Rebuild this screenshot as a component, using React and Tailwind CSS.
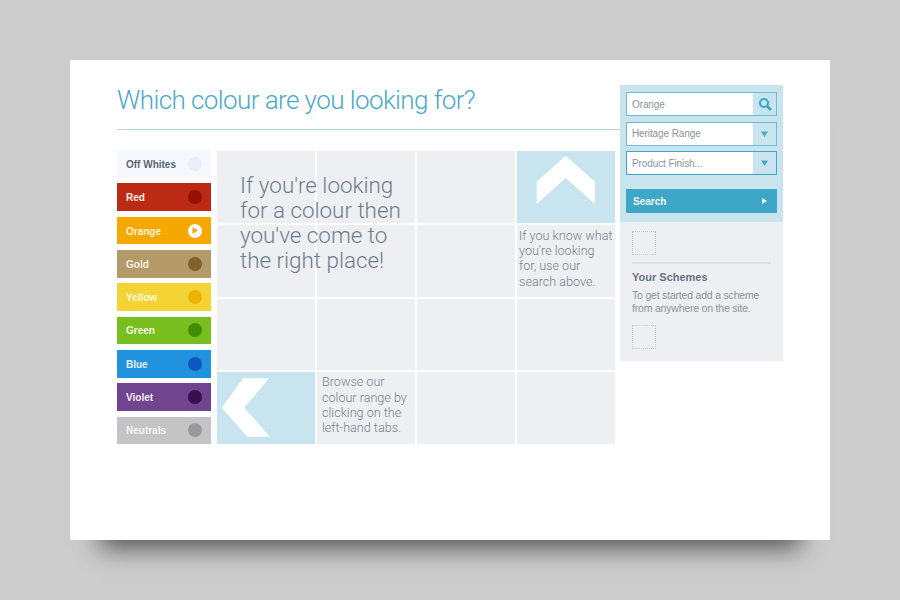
import React from "react";

const tabs = [
  { name: "Off Whites", bg: "bg-[#f5f8fd]", dot: "bg-[#e9eefa]", text: "text-[#5a6670]" },
  { name: "Red", bg: "bg-[#bb2a14]", dot: "bg-[#941000]", text: "text-[#fbe9e4]" },
  { name: "Orange", bg: "bg-[#f6a800]", dot: "bg-white", text: "text-[#fff4dc]", play: true },
  { name: "Gold", bg: "bg-[#b49a68]", dot: "bg-[#84622b]", text: "text-[#f6f0e2]" },
  { name: "Yellow", bg: "bg-[#f4d434]", dot: "bg-[#ecb400]", text: "text-[#fdf8dc]" },
  { name: "Green", bg: "bg-[#78be1e]", dot: "bg-[#3f8e00]", text: "text-[#f1f9e2]" },
  { name: "Blue", bg: "bg-[#2092de]", dot: "bg-[#0c58c0]", text: "text-[#e8f4fc]" },
  { name: "Violet", bg: "bg-[#70448e]", dot: "bg-[#35124f]", text: "text-[#f2ebf6]" },
  { name: "Neutrals", bg: "bg-[#c4c4c6]", dot: "bg-[#9a9a9e]", text: "text-[#f4f4f4]" },
];

const sans = "font-['Liberation_Sans',Arial,sans-serif]";
const light = "font-['Roboto','Liberation_Sans',sans-serif] font-light";

function Cell({ children, blue }) {
  return <div className={`h-[71.75px] ${blue ? "bg-[#c8e4ee]" : "bg-[#eeeff3]"}`}>{children}</div>;
}

function Note({ lines, wide }) {
  return (
    <p className={`${light} text-[12.6px] leading-[15.3px] text-[#77818a] ${wide ? "pl-[2px] pt-[3px]" : "pl-[5px] pt-[2px]"} whitespace-nowrap`}>
      {lines.map((l) => (
        <span key={l} className="block">{l}</span>
      ))}
    </p>
  );
}

function Field({ label, strong, children }) {
  return (
    <div className={`flex h-[24px] border ${strong ? "border-[#3ea6c6]" : "border-[#6dbcd4]"}`}>
      <div className={`flex-1 bg-white pl-[5px] flex items-center text-[10px] tracking-[-0.1px] text-[#8a939b] ${sans}`}>{label}</div>
      <div className="w-[23px] flex items-center justify-center bg-[#c8e4ee]">{children}</div>
    </div>
  );
}

function Caret() {
  return (
    <svg width="7" height="6" viewBox="0 0 7 6">
      <polygon points="0,0.5 7,0.5 3.5,6" fill="#4aa9c9" />
    </svg>
  );
}

function Placeholder() {
  return <div className="w-[24px] h-[24px] border border-dotted border-[#c6cad0]" />;
}

export default function App() {
  return (
    <div className="w-[900px] h-[600px] bg-[#cccccc] pt-[60px] overflow-hidden">
      <div className="ml-[70px] w-[760px] h-[480px] bg-white flex shadow-[0_38px_24px_-30px_rgba(0,0,0,0.6)]">
        <div className="ml-[47px] w-[503px] shrink-0">
          <h1 className={`${light} text-[#4aa9cc] text-[26px] tracking-[-0.58px] leading-[30px] mt-[25px] whitespace-nowrap`}>
            Which colour are you looking for?
          </h1>
          <div className="h-px bg-[#b8d6e0] mt-[14px]" />
          <div className="flex mt-[20px] gap-[6px]">
            <div className="w-[94px] flex flex-col gap-[5.53px]">
              {tabs.map((t) => (
                <div key={t.name} className={`h-[27.8px] ${t.bg} flex items-center justify-between pl-[9px] pr-[9px]`}>
                  <span className={`${sans} font-bold text-[10px] pt-px ${t.text}`}>{t.name}</span>
                  <span className={`w-[14px] h-[14px] rounded-full ${t.dot} flex items-center justify-center`}>
                    {t.play && (
                      <svg width="6" height="7" viewBox="0 0 6 7">
                        <polygon points="0.5,0 6,3.5 0.5,7" fill="#f6a800" />
                      </svg>
                    )}
                  </span>
                </div>
              ))}
            </div>
            <div className="relative w-[398px] grid grid-cols-4 gap-[2px] content-start mt-px">
              <Cell /><Cell /><Cell />
              <Cell blue>
                <svg width="98" height="72" viewBox="0 0 98 72">
                  <polygon points="48.7,4.7 19.7,30.7 19.7,53 48.7,27 78,53 78,30.7" fill="#fff" />
                </svg>
              </Cell>
              <Cell /><Cell /><Cell />
              <Cell>
                <Note wide lines={["If you know what", "you're looking", "for, use our", "search above."]} />
              </Cell>
              <Cell /><Cell /><Cell /><Cell />
              <Cell blue>
                <svg width="98" height="72" viewBox="0 0 98 72">
                  <polygon points="4.7,35.7 26.3,6.3 52,6.3 27.3,35.7 53,64.7 30.3,64.7" fill="#fff" />
                </svg>
              </Cell>
              <Cell>
                <Note lines={["Browse our", "colour range by", "clicking on the", "left-hand tabs."]} />
              </Cell>
              <Cell /><Cell />
              <p className={`absolute left-[23px] top-[22px] ${light} text-[#6d7e8c] text-[22.4px] leading-[25px] whitespace-nowrap`}>
                <span className="block">If you're looking</span>
                <span className="block">for a colour then</span>
                <span className="block">you've come to</span>
                <span className="block">the right place!</span>
              </p>
            </div>
          </div>
        </div>
        <div className="w-[163px] mt-[25px] self-start">
          <div className="bg-[#c8e4ee] h-[137px] px-[6px] pt-[7px]">
            <div className="flex flex-col gap-[5.7px]">
              <Field label="Orange">
                <svg width="14" height="14" viewBox="0 0 14 14" fill="none" stroke="#3ea6c6" strokeWidth="2.2">
                  <circle cx="6" cy="6" r="4" />
                  <line x1="9" y1="9" x2="13" y2="13" strokeWidth="2.8" />
                </svg>
              </Field>
              <Field label="Heritage Range"><Caret /></Field>
              <Field label="Product Finish..." strong><Caret /></Field>
            </div>
            <div className="mt-[13.5px] h-[24px] bg-[#3ea6c6] flex items-center justify-between pl-[7px] pr-[10px]">
              <span className={`${sans} font-bold text-[10px] pt-px text-[#f0f8fb]`}>Search</span>
              <svg width="5" height="6" viewBox="0 0 5 6"><polygon points="0,0 5,3 0,6" fill="#fff" /></svg>
            </div>
          </div>
          <div className="bg-[#eeeff3] h-[139px] px-[12px] pt-[9px]">
            <Placeholder />
            <div className="h-[2px] bg-[#dcdfe4] mt-[7px]" />
            <h2 className={`${sans} font-bold text-[11px] leading-[13px] text-[#66747f] mt-[7px]`}>Your Schemes</h2>
            <p className={`${sans} text-[10.5px] tracking-[-0.2px] leading-[12.5px] text-[#8a939b] mt-[5px] whitespace-nowrap`}>
              <span className="block">To get started add a scheme</span>
              <span className="block">from anywhere on the site.</span>
            </p>
            <div className="mt-[11px]"><Placeholder /></div>
          </div>
        </div>
      </div>
    </div>
  );
}
